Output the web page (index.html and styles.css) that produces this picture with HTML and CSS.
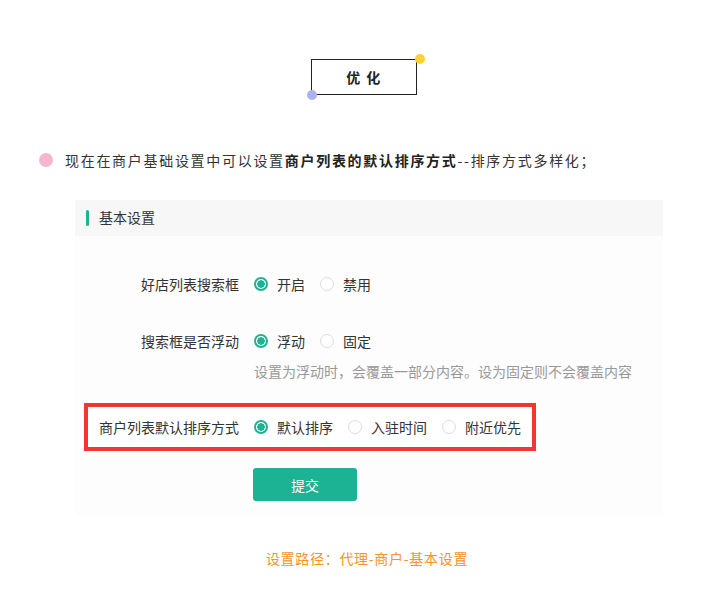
FILE: index.html
```html
<!DOCTYPE html>
<html lang="zh">
<head>
<meta charset="utf-8">
<link rel="stylesheet" href="styles.css">
</head>
<body>
<div class="page">
  <div class="title-wrap">
    <div class="title">
      <span class="dot dot-yellow"></span>
      <span class="title-text">优 化</span>
      <span class="dot dot-blue"></span>
    </div>
  </div>

  <p class="intro"><span class="bullet"></span>现在在商户基础设置中可以设置<b>商户列表的默认排序方式</b>--排序方式多样化；</p>

  <div class="card">
    <div class="card-head"><span class="bar"></span>基本设置</div>
    <div class="form">
      <div class="row">
        <span class="label">好店列表搜索框</span>
        <span class="opt"><span class="radio on"></span>开启</span>
        <span class="opt"><span class="radio"></span>禁用</span>
      </div>
      <div class="row row2">
        <span class="label">搜索框是否浮动</span>
        <span class="opt"><span class="radio on"></span>浮动</span>
        <span class="opt"><span class="radio"></span>固定</span>
      </div>
      <p class="help">设置为浮动时，会覆盖一部分内容。设为固定则不会覆盖内容</p>
      <div class="row highlight">
        <span class="label label-hl">商户列表默认排序方式</span>
        <span class="opt"><span class="radio on"></span>默认排序</span>
        <span class="opt"><span class="radio"></span>入驻时间</span>
        <span class="opt"><span class="radio"></span>附近优先</span>
      </div>
      <div class="actions"><button class="submit">提交</button></div>
    </div>
  </div>

  <p class="footer">设置路径：代理-商户-基本设置</p>
</div>
</body>
</html>
```

FILE: styles.css
```css
* { box-sizing: border-box; }
body {
  margin: 0;
  background: #fff;
  font-family: "Noto Sans CJK SC", "Noto Sans", sans-serif;
  color: #333;
  font-size: 14px;
}
.page { width: 726px; }

.title-wrap {
  padding-top: 59px;
  display: flex;
  justify-content: center;
  padding-left: 2px;
}
.title {
  position: relative;
  width: 106px;
  height: 36px;
  border: 1px solid #222;
  display: flex;
  align-items: center;
  justify-content: center;
}
.title-text {
  font-weight: bold;
  font-size: 14px;
  color: #222;
  letter-spacing: 1.5px;
}
.dot {
  position: absolute;
  width: 10px;
  height: 10px;
  border-radius: 50%;
}
.dot-yellow { background: #fdd137; right: -9px; top: -6px; }
.dot-blue { background: #aab3ee; left: -5px; bottom: -6px; }

.intro {
  margin: 55px 0 0 39px;
  height: 20px;
  line-height: 20px;
  display: flex;
  align-items: center;
  font-size: 14px;
  letter-spacing: 1.7px;
  color: #333;
}
.intro b { font-weight: bold; color: #222; }
.bullet {
  width: 14px;
  height: 14px;
  border-radius: 50%;
  background: #f7b6cf;
  margin-right: 12px;
  flex: none;
}

.card {
  margin: 30px 0 0 75px;
  width: 588px;
}
.card-head {
  height: 36px;
  background: #f6f7f6;
  display: flex;
  align-items: center;
  padding: 0 0 3px 11px;
  color: #333;
  font-size: 14px;
}
.bar {
  width: 3px;
  height: 16px;
  border-radius: 2px;
  background: #1cb394;
  margin: 3px 10px 0 0;
}
.form {
  background: #fdfdfd;
  padding: 31px 0 14px 0;
}
.row {
  display: flex;
  align-items: center;
  height: 34px;
  color: #333;
}
.label {
  width: 164px;
  text-align: right;
  margin-right: 15px;
}
.opt {
  display: flex;
  align-items: center;
  margin-right: 15px;
}
.radio {
  width: 14px;
  height: 14px;
  border-radius: 50%;
  border: 1px solid #ddd;
  background: #fff;
  margin-right: 9px;
  flex: none;
}
.radio.on {
  border: 2px solid #1cb394;
  background: radial-gradient(circle, #1cb394 0 3.5px, #fff 4px);
}
.row2 { margin-top: 23px; }
.help {
  margin: 3px 0 0 179px;
  line-height: 20px;
  color: #999;
}
.highlight {
  margin: 22px 0 0 9px;
  width: fit-content;
  height: 48px;
  border: 4px solid #f23636;
  padding: 0 0 0 11px;
  background: #fff;
}
.label-hl { width: auto; }
.highlight .opt:last-child { margin-right: 11px; }
.actions {
  margin: 17px 0 0 178px;
}
.submit {
  width: 104px;
  height: 33px;
  border: none;
  border-radius: 3px;
  background: #1cb394;
  color: #fff;
  font-family: inherit;
  font-size: 14px;
  padding: 0;
}
.footer {
  margin: 33px 0 0 0;
  padding-left: 8px;
  text-align: center;
  line-height: 20px;
  color: #f5922a;
  font-size: 14px;
  letter-spacing: 0.7px;
}
```
